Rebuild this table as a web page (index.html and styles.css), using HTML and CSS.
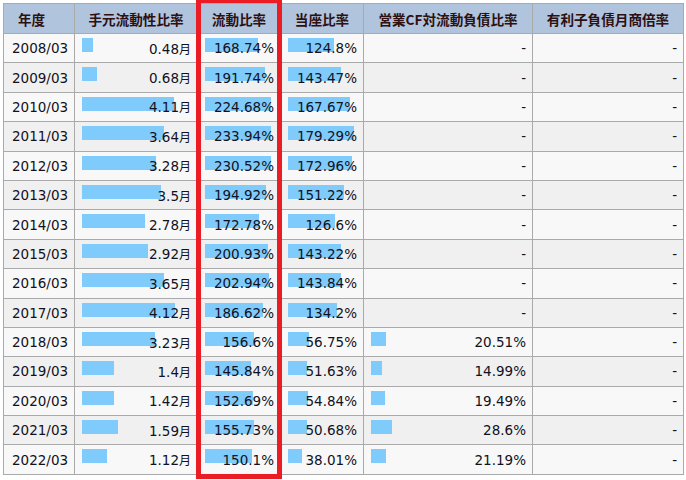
FILE: index.html
```html
<!DOCTYPE html>
<html lang="ja">
<head>
<meta charset="utf-8">
<link rel="stylesheet" href="styles.css">
</head>
<body>
<div class="wrap">
<table class="fin">
<colgroup>
<col class="c1"><col class="c2"><col class="c3"><col class="c4"><col class="c5"><col class="c6">
</colgroup>
<thead>
<tr><th class="year">年度</th><th>手元流動性比率</th><th>流動比率</th><th>当座比率</th><th>営業CF対流動負債比率</th><th>有利子負債月商倍率</th></tr>
</thead>
<tbody>
<tr><td class="y">2008/03</td><td><span class="bar" style="width:11px"></span><span class="v">0.48<small>月</small></span></td><td><span class="bar" style="width:53px"></span><span class="v">168.74%</span></td><td><span class="bar" style="width:46px"></span><span class="v">124.8%</span></td><td><span class="v">-</span></td><td><span class="v">-</span></td></tr>
<tr><td class="y">2009/03</td><td><span class="bar" style="width:15px"></span><span class="v">0.68<small>月</small></span></td><td><span class="bar" style="width:60px"></span><span class="v">191.74%</span></td><td><span class="bar" style="width:53px"></span><span class="v">143.47%</span></td><td><span class="v">-</span></td><td><span class="v">-</span></td></tr>
<tr><td class="y">2010/03</td><td><span class="bar" style="width:92px"></span><span class="v">4.11<small>月</small></span></td><td><span class="bar" style="width:66px"></span><span class="v">224.68%</span></td><td><span class="bar" style="width:62px"></span><span class="v">167.67%</span></td><td><span class="v">-</span></td><td><span class="v">-</span></td></tr>
<tr><td class="y">2011/03</td><td><span class="bar" style="width:82px"></span><span class="v">3.64<small>月</small></span></td><td><span class="bar" style="width:66px"></span><span class="v">233.94%</span></td><td><span class="bar" style="width:66px"></span><span class="v">179.29%</span></td><td><span class="v">-</span></td><td><span class="v">-</span></td></tr>
<tr><td class="y">2012/03</td><td><span class="bar" style="width:74px"></span><span class="v">3.28<small>月</small></span></td><td><span class="bar" style="width:66px"></span><span class="v">230.52%</span></td><td><span class="bar" style="width:64px"></span><span class="v">172.96%</span></td><td><span class="v">-</span></td><td><span class="v">-</span></td></tr>
<tr><td class="y">2013/03</td><td><span class="bar" style="width:79px"></span><span class="v">3.5<small>月</small></span></td><td><span class="bar" style="width:61px"></span><span class="v">194.92%</span></td><td><span class="bar" style="width:56px"></span><span class="v">151.22%</span></td><td><span class="v">-</span></td><td><span class="v">-</span></td></tr>
<tr><td class="y">2014/03</td><td><span class="bar" style="width:63px"></span><span class="v">2.78<small>月</small></span></td><td><span class="bar" style="width:54px"></span><span class="v">172.78%</span></td><td><span class="bar" style="width:47px"></span><span class="v">126.6%</span></td><td><span class="v">-</span></td><td><span class="v">-</span></td></tr>
<tr><td class="y">2015/03</td><td><span class="bar" style="width:66px"></span><span class="v">2.92<small>月</small></span></td><td><span class="bar" style="width:63px"></span><span class="v">200.93%</span></td><td><span class="bar" style="width:53px"></span><span class="v">143.22%</span></td><td><span class="v">-</span></td><td><span class="v">-</span></td></tr>
<tr><td class="y">2016/03</td><td><span class="bar" style="width:82px"></span><span class="v">3.65<small>月</small></span></td><td><span class="bar" style="width:64px"></span><span class="v">202.94%</span></td><td><span class="bar" style="width:53px"></span><span class="v">143.84%</span></td><td><span class="v">-</span></td><td><span class="v">-</span></td></tr>
<tr><td class="y">2017/03</td><td><span class="bar" style="width:93px"></span><span class="v">4.12<small>月</small></span></td><td><span class="bar" style="width:58px"></span><span class="v">186.62%</span></td><td><span class="bar" style="width:49px"></span><span class="v">134.2%</span></td><td><span class="v">-</span></td><td><span class="v">-</span></td></tr>
<tr><td class="y">2018/03</td><td><span class="bar" style="width:73px"></span><span class="v">3.23<small>月</small></span></td><td><span class="bar" style="width:49px"></span><span class="v">156.6%</span></td><td><span class="bar" style="width:21px"></span><span class="v">56.75%</span></td><td><span class="bar" style="width:15px"></span><span class="v">20.51%</span></td><td><span class="v">-</span></td></tr>
<tr><td class="y">2019/03</td><td><span class="bar" style="width:32px"></span><span class="v">1.4<small>月</small></span></td><td><span class="bar" style="width:46px"></span><span class="v">145.84%</span></td><td><span class="bar" style="width:19px"></span><span class="v">51.63%</span></td><td><span class="bar" style="width:11px"></span><span class="v">14.99%</span></td><td><span class="v">-</span></td></tr>
<tr><td class="y">2020/03</td><td><span class="bar" style="width:32px"></span><span class="v">1.42<small>月</small></span></td><td><span class="bar" style="width:48px"></span><span class="v">152.69%</span></td><td><span class="bar" style="width:20px"></span><span class="v">54.84%</span></td><td><span class="bar" style="width:14px"></span><span class="v">19.49%</span></td><td><span class="v">-</span></td></tr>
<tr><td class="y">2021/03</td><td><span class="bar" style="width:36px"></span><span class="v">1.59<small>月</small></span></td><td><span class="bar" style="width:49px"></span><span class="v">155.73%</span></td><td><span class="bar" style="width:19px"></span><span class="v">50.68%</span></td><td><span class="bar" style="width:21px"></span><span class="v">28.6%</span></td><td><span class="v">-</span></td></tr>
<tr><td class="y">2022/03</td><td><span class="bar" style="width:25px"></span><span class="v">1.12<small>月</small></span></td><td><span class="bar" style="width:47px"></span><span class="v">150.1%</span></td><td><span class="bar" style="width:14px"></span><span class="v">38.01%</span></td><td><span class="bar" style="width:15px"></span><span class="v">21.19%</span></td><td><span class="v">-</span></td></tr>
</tbody>
</table>
<div class="highlight"></div>
</div>
</body>
</html>
```

FILE: styles.css
```css
html, body {
  margin: 0;
  padding: 0;
  background: #ffffff;
}
.wrap {
  position: relative;
  padding: 3px 0 0 3px;
  width: 686px;
  height: 480px;
  box-sizing: border-box;
  overflow: hidden;
}
.fin {
  border-collapse: collapse;
  table-layout: fixed;
  width: 680px;
  font-family: "DejaVu Sans", "Noto Sans CJK JP", sans-serif;
  font-size: 13.5px;
  color: #111122;
}
.c1 { width: 71px; }
.c2 { width: 123px; }
.c3 { width: 83px; }
.c4 { width: 83px; }
.c5 { width: 169px; }
.c6 { width: 151px; }
.fin th,
.fin td {
  border: 1px solid #aaaaaa;
}
.fin th {
  background: #b0c4de;
  color: #2e1010;
  font-family: "Noto Sans CJK JP", sans-serif;
  font-weight: bold;
  font-size: 13.6px;
  height: 29px;
  padding: 0;
  text-align: center;
  white-space: nowrap;
}
.fin th.year {
  text-align: left;
  padding-left: 14px;
}
.fin td {
  position: relative;
  height: 28.4px;
  padding: 0 6px 0 8px;
  text-align: right;
  white-space: nowrap;
}
.fin tbody tr:nth-child(odd) td { background: #f8f8f8; }
.fin tbody tr:nth-child(even) td { background: #f0f0f0; }
.fin td.y {
  text-align: left;
  padding-left: 8px;
}
.bar {
  position: absolute;
  left: 7px;
  top: 4px;
  height: 14px;
  background: #7fcbfb;
}
.v {
  position: relative;
}
.v small {
  font-family: "Noto Sans CJK JP", sans-serif;
  font-size: 12px;
}
.highlight {
  position: absolute;
  left: 196px;
  top: -2px;
  width: 86px;
  height: 481px;
  box-sizing: border-box;
  border: 5px solid #ec1c24;
}
```
